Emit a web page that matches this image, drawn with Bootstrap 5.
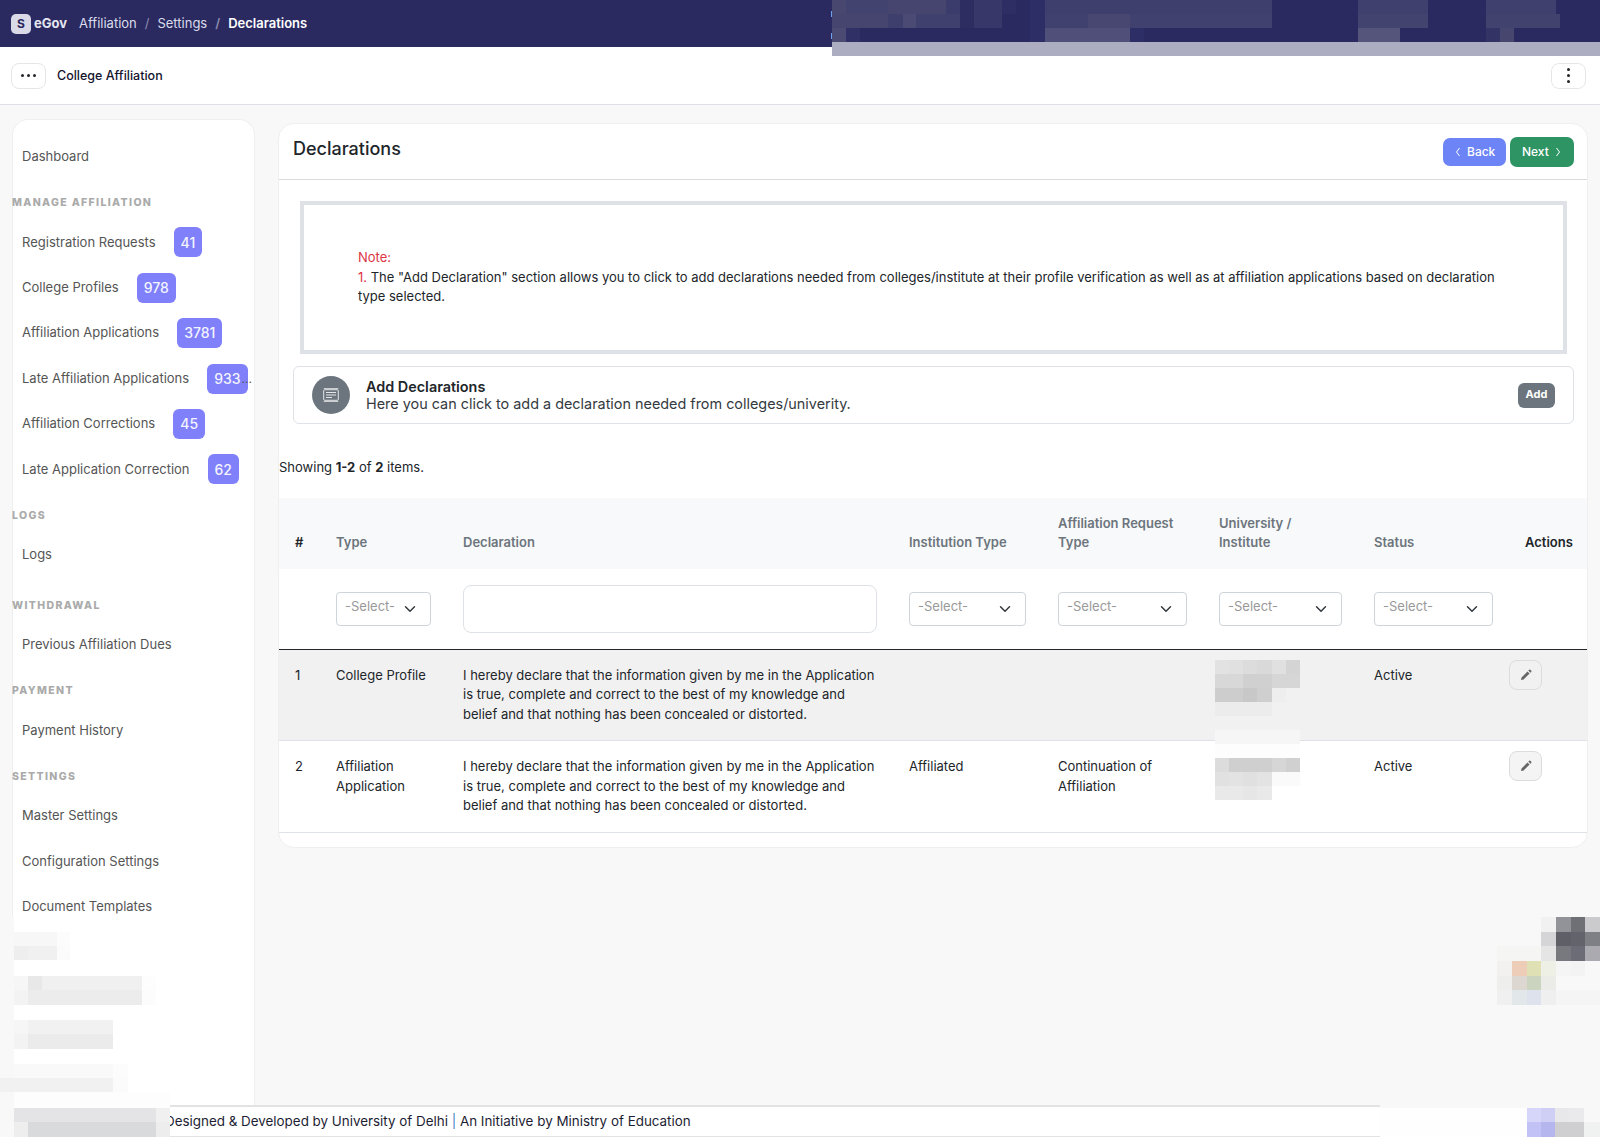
<!DOCTYPE html>
<html lang="en">
<head>
    <meta charset="UTF-8">
    <title>Declarations - College Affiliation</title>
    <link rel="stylesheet" href="https://cdn.jsdelivr.net/npm/bootstrap@5.3.3/dist/css/bootstrap.min.css">
    <style>
        body {
            font-family: "Inter", "Liberation Sans", sans-serif;
            font-size: 13px;
            line-height: 19.5px;
            background: #f8f8f8;
            color: #212529;
            height: 100vh;
            overflow: hidden;
        }

        .top-strip { height: 47px; background: #2a2a60; padding-left: 11px; }
        .logo-box {
            width: 20px; height: 20px; border-radius: 5px;
            background: #d9d9e8; color: #2a2a60;
            font-size: 12px; font-weight: 700;
        }
        .logo-name { color: #e6e6f0; font-weight: 700; margin-left: 3px; margin-right: 12px; }
        .top-strip .breadcrumb { --bs-breadcrumb-margin-bottom: 0; --bs-breadcrumb-divider-color: #8c8cb0; --bs-breadcrumb-item-active-color: #fff; }
        .top-strip .breadcrumb-item a { color: #dcdcec; text-decoration: none; }
        .top-strip .breadcrumb-item.active { font-weight: 600; }

        .sub-strip { height: 58px; background: #fff; border-bottom: 1px solid #dfdfe6; padding: 0 14px 0 11px; }
        .dots-btn {
            width: 35px; height: 26px; border: 1px solid #e6e6e6; border-radius: 8px;
            background: #fff; padding: 0; gap: 3px;
        }
        .dots-btn i { width: 3px; height: 3px; border-radius: 50%; background: #212529; display: block; }
        .app-name { font-weight: 500; font-size: 12.5px; color: #14142e; margin-left: 11px; }

        .page-body { flex: 1 1 auto; min-height: 0; padding-left: 12px; }

        .side-panel {
            width: 243px; margin-top: 14px; padding-top: 14px;
            background: #fff; border: 1px solid #efefef; border-bottom: 0;
            border-radius: 16px 16px 0 0;
        }
        .side-link {
            height: 45.4px; padding: 0 9px; color: #555;
            text-decoration: none; gap: 18px; white-space: nowrap;
        }
        .side-head {
            height: 40.3px; padding-top: 17px; margin-left: -1px;
            font-size: 10.5px; line-height: 13px; font-weight: 800;
            letter-spacing: 1.35px; color: #aaa; text-transform: uppercase;
        }
        .side-head.extra-gap { margin-top: 4px; }
        .count-pill {
            height: 30px; padding: 0 7px; border-radius: 6px;
            background: #7f80fa; color: #f4f4ff;
            font-size: 14px; font-weight: 500;
            display: inline-flex; align-items: center;
        }
        .more-dots { margin-left: -24px; color: #555; font-size: 12px; }

        .decl-card {
            width: 1310px; height: 725px; margin: 18px 0 0 23px;
            background: #fff; border: 1px solid #efefef; border-radius: 16px;
            overflow: hidden;
        }
        .decl-head { height: 56px; border-bottom: 1px solid #d9d9d9; padding: 0 13px 0 14px; }
        .decl-head h1 { font-size: 18px; font-weight: 500; margin: 0 0 6px; }
        .head-btn {
            height: 28px; border: 0; border-radius: 7px; color: #fff;
            font-size: 12px; font-weight: 500; padding: 0 10px 0 12px; gap: 6px;
            display: inline-flex; align-items: center;
        }
        .head-btn.is-back { width: 63px; background: #6c84f5; }
        .head-btn.is-next { width: 64px; height: 30px; background: #2e9464; }
        .head-btn:hover { color: #fff; }

        .note-box {
            height: 153px; margin: 21px 20px 0 21px; padding: 43px 60px 0 54px;
            border: 4px solid #dee2e6;
        }
        .note-red { color: #dc3545; }

        .add-row {
            height: 58px; margin: 12px 13px 0 14px; padding: 0 18px 0 18px;
            border: 1px solid #dee2e6; border-radius: 6px;
        }
        .add-circle { width: 38px; height: 38px; border-radius: 50%; background: #6c757d; }
        .add-title { font-size: 14.4px; font-weight: 600; line-height: 17px; }
        .add-desc { font-size: 14.4px; line-height: 17px; color: #343a40; }
        .add-btn {
            width: 37px; height: 25px; padding: 0; border: 0; border-radius: 6px;
            background: #6c757d; color: #fff; font-size: 11px; font-weight: 700;
        }

        .count-line { margin: 34px 0 20px; }

        .decl-table { table-layout: fixed; width: 1308px; margin: 0; --bs-table-border-color: #dee2e6; }
        .decl-table th, .decl-table td { padding: 16px; }
        .decl-table thead tr:first-child th { background: #f8f9fa; color: #6c757d; font-weight: 600; border: 0; height: 71px; }
        .decl-table thead tr:first-child th.dark-head { color: #212529; }
        .decl-table thead tr:last-child td { border-bottom: 1px solid #212529; vertical-align: middle; padding-right: 16px; height: 80px; }
        .decl-table tbody tr.row-grey td { background: #f1f1f1; }
        .decl-table .edit-cell { padding: 10px 0 0; }
        .col-num { width: 41px; }
        .col-type { width: 127px; }
        .col-decl { width: 446px; }
        .col-inst { width: 149px; }
        .col-req { width: 161px; }
        .col-uni { width: 155px; }
        .col-stat { width: 151px; }
        .col-act { width: 78px; }

        .filter-select {
            height: 34px; padding: 0 24px 4px 8px; font-size: 13px; color: #999;
            border-radius: 4px; border-color: #ced4da;
        }
        .filter-text { height: 48px; border-radius: 8px; border-color: #dee2e6; }
        .edit-btn {
            width: 33px; height: 30px; padding: 0;
            border: 1px solid #dcdcdc; border-radius: 8px; background: #f4f4f4;
        }
        .row-grey .edit-btn { background: #f1f1f1; }

        .foot-strip {
            height: 32px; background: #fff;
            border-top: 2px solid #e3e3e6; border-bottom: 1px solid #e3e3e6;
            padding-left: 165px; font-size: 13.4px; color: #1d1d33;
        }
        .foot-bar { color: #3f83c8; }

        .pixel-mask { position: absolute; left: 0; top: 0; width: 1600px; height: 1137px; pointer-events: none; shape-rendering: crispEdges; }
    </style>
</head>
<body class="d-flex flex-column position-relative">

    <div class="top-strip d-flex align-items-center flex-shrink-0">
        <span class="logo-box d-flex align-items-center justify-content-center">S</span>
        <span class="logo-name">eGov</span>
        <nav aria-label="breadcrumb">
            <ol class="breadcrumb">
                <li class="breadcrumb-item"><a href="#">Affiliation</a></li>
                <li class="breadcrumb-item"><a href="#">Settings</a></li>
                <li class="breadcrumb-item active" aria-current="page">Declarations</li>
            </ol>
        </nav>
    </div>

    <div class="sub-strip d-flex align-items-center flex-shrink-0">
        <button type="button" class="dots-btn d-flex align-items-center justify-content-center"><i></i><i></i><i></i></button>
        <span class="app-name">College Affiliation</span>
        <button type="button" class="dots-btn d-flex flex-column align-items-center justify-content-center ms-auto"><i></i><i></i><i></i></button>
    </div>

    <div class="page-body d-flex">
        <aside class="side-panel flex-shrink-0">
            <a href="#" class="side-link d-flex align-items-center">Dashboard</a>

            <div class="side-head">Manage Affiliation</div>
            <a href="#" class="side-link d-flex align-items-center">Registration Requests <span class="count-pill">41</span></a>
            <a href="#" class="side-link d-flex align-items-center">College Profiles <span class="count-pill">978</span></a>
            <a href="#" class="side-link d-flex align-items-center">Affiliation Applications <span class="count-pill">3781</span></a>
            <a href="#" class="side-link d-flex align-items-center">Late Affiliation Applications <span class="count-pill">933</span><span class="more-dots">...</span></a>
            <a href="#" class="side-link d-flex align-items-center">Affiliation Corrections <span class="count-pill">45</span></a>
            <a href="#" class="side-link d-flex align-items-center">Late Application Correction <span class="count-pill">62</span></a>

            <div class="side-head">Logs</div>
            <a href="#" class="side-link d-flex align-items-center">Logs</a>

            <div class="side-head extra-gap">Withdrawal</div>
            <a href="#" class="side-link d-flex align-items-center">Previous Affiliation Dues</a>

            <div class="side-head">Payment</div>
            <a href="#" class="side-link d-flex align-items-center">Payment History</a>

            <div class="side-head">Settings</div>
            <a href="#" class="side-link d-flex align-items-center">Master Settings</a>
            <a href="#" class="side-link d-flex align-items-center">Configuration Settings</a>
            <a href="#" class="side-link d-flex align-items-center">Document Templates</a>
        </aside>

        <main class="decl-card flex-shrink-0">
            <div class="decl-head d-flex align-items-center justify-content-between">
                <h1>Declarations</h1>
                <div class="d-flex align-items-center gap-1">
                    <a href="#" class="btn head-btn is-back">
                        <svg width="6" height="10" viewBox="0 0 6 10"><path d="M4.5 1 1.5 5l3 4" fill="none" stroke="#fff" stroke-width="1"/></svg>
                        Back
                    </a>
                    <a href="#" class="btn head-btn is-next">
                        Next
                        <svg width="6" height="10" viewBox="0 0 6 10"><path d="M1.5 1l3 4-3 4" fill="none" stroke="#fff" stroke-width="1"/></svg>
                    </a>
                </div>
            </div>

            <div class="note-box">
                <div class="note-red">Note:</div>
                <div><span class="note-red">1.</span> The "Add Declaration" section allows you to click to add declarations needed from colleges/institute at their profile verification as well as at affiliation applications based on declaration type selected.</div>
            </div>

            <div class="add-row d-flex align-items-center">
                <span class="add-circle d-flex align-items-center justify-content-center flex-shrink-0">
                    <svg width="16" height="14" viewBox="0 0 16 14" fill="none" stroke="#e4e6e8">
                        <rect x="0.7" y="1.7" width="14.6" height="10.6" rx="1"/>
                        <path d="M0.7 0.5h14.6M0.7 13.5h14.6" stroke-width="0.8"/>
                        <path d="M3 4.5h10M3 7h10M3 9.5h6" stroke-width="1.2"/>
                    </svg>
                </span>
                <div class="ms-3 flex-grow-1">
                    <div class="add-title">Add Declarations</div>
                    <div class="add-desc">Here you can click to add a declaration needed from colleges/univerity.</div>
                </div>
                <button type="button" class="add-btn">Add</button>
            </div>

            <div class="count-line">Showing <b>1-2</b> of <b>2</b> items.</div>

            <table class="table decl-table">
                <colgroup>
                    <col class="col-num"><col class="col-type"><col class="col-decl"><col class="col-inst">
                    <col class="col-req"><col class="col-uni"><col class="col-stat"><col class="col-act">
                </colgroup>
                <thead>
                    <tr>
                        <th class="dark-head">#</th>
                        <th>Type</th>
                        <th>Declaration</th>
                        <th>Institution Type</th>
                        <th>Affiliation Request Type</th>
                        <th>University / Institute</th>
                        <th>Status</th>
                        <th class="dark-head">Actions</th>
                    </tr>
                    <tr>
                        <td></td>
                        <td><select class="form-select filter-select"><option>-Select-</option></select></td>
                        <td><input type="text" class="form-control filter-text"></td>
                        <td><select class="form-select filter-select"><option>-Select-</option></select></td>
                        <td><select class="form-select filter-select"><option>-Select-</option></select></td>
                        <td><select class="form-select filter-select"><option>-Select-</option></select></td>
                        <td><select class="form-select filter-select"><option>-Select-</option></select></td>
                        <td></td>
                    </tr>
                </thead>
                <tbody>
                    <tr class="row-grey">
                        <td>1</td>
                        <td>College Profile</td>
                        <td>I hereby declare that the information given by me in the Application is true, complete and correct to the best of my knowledge and belief and that nothing has been concealed or distorted.</td>
                        <td></td>
                        <td></td>
                        <td></td>
                        <td>Active</td>
                        <td class="edit-cell">
                            <button type="button" class="edit-btn d-flex align-items-center justify-content-center" aria-label="Edit">
                                <svg width="12" height="12" viewBox="0 0 12 12"><path d="M1 11l.5-2.6 6-6L9.6 4.5l-6 6zM8.3 1.6l.9-.9a.8.8 0 0 1 1.1 0l1 1a.8.8 0 0 1 0 1.1l-.9.9z" fill="#666"/></svg>
                            </button>
                        </td>
                    </tr>
                    <tr>
                        <td>2</td>
                        <td>Affiliation Application</td>
                        <td>I hereby declare that the information given by me in the Application is true, complete and correct to the best of my knowledge and belief and that nothing has been concealed or distorted.</td>
                        <td>Affiliated</td>
                        <td>Continuation of Affiliation</td>
                        <td></td>
                        <td>Active</td>
                        <td class="edit-cell">
                            <button type="button" class="edit-btn d-flex align-items-center justify-content-center" aria-label="Edit">
                                <svg width="12" height="12" viewBox="0 0 12 12"><path d="M1 11l.5-2.6 6-6L9.6 4.5l-6 6zM8.3 1.6l.9-.9a.8.8 0 0 1 1.1 0l1 1a.8.8 0 0 1 0 1.1l-.9.9z" fill="#666"/></svg>
                            </button>
                        </td>
                    </tr>
                </tbody>
            </table>
        </main>
    </div>

    <footer class="foot-strip d-flex align-items-center flex-shrink-0">
        <span>Designed &amp; Developed by University of Delhi <span class="foot-bar">|</span> An Initiative by Ministry of Education</span>
    </footer>

    <!-- pixelated blocks that hide parts of the screen -->
    <svg class="pixel-mask" viewBox="0 0 1600 1137" aria-hidden="true">
        <!-- top right -->
        <rect x="832" y="42" width="768" height="14" fill="#adadc1"/>
        <rect x="831" y="11" width="1" height="6" fill="#6fa0f0"/><rect x="831" y="33" width="1" height="6" fill="#6fa0f0"/>
        <rect x="832" y="0" width="14" height="14" fill="#47476f"/><rect x="846" y="0" width="42" height="14" fill="#434370"/><rect x="888" y="0" width="58" height="14" fill="#45456f"/><rect x="946" y="0" width="14" height="14" fill="#3c3c6c"/><rect x="960" y="0" width="14" height="14" fill="#2e2d62"/><rect x="974" y="0" width="28" height="14" fill="#37376a"/><rect x="1002" y="0" width="14" height="14" fill="#2e2e64"/><rect x="1030" y="0" width="15" height="14" fill="#2e2e66"/><rect x="1045" y="0" width="227" height="14" fill="#3f3f6d"/><rect x="1358" y="0" width="70" height="14" fill="#40406e"/><rect x="1486" y="0" width="70" height="14" fill="#40406e"/>
        <rect x="832" y="14" width="56" height="14" fill="#45456f"/><rect x="888" y="14" width="15" height="14" fill="#3f3f6d"/><rect x="903" y="14" width="13" height="14" fill="#4a4a74"/><rect x="916" y="14" width="44" height="14" fill="#40406e"/><rect x="960" y="14" width="14" height="14" fill="#2e2d62"/><rect x="974" y="14" width="28" height="14" fill="#37376a"/><rect x="1030" y="14" width="15" height="14" fill="#2e2e66"/><rect x="1045" y="14" width="43" height="14" fill="#41416f"/><rect x="1088" y="14" width="42" height="14" fill="#474772"/><rect x="1130" y="14" width="142" height="14" fill="#41416f"/><rect x="1358" y="14" width="70" height="14" fill="#43436f"/><rect x="1486" y="14" width="74" height="14" fill="#42426f"/>
        <rect x="832" y="28" width="14" height="14" fill="#4a4a72"/><rect x="846" y="28" width="14" height="14" fill="#303066"/><rect x="1030" y="28" width="15" height="14" fill="#2e2e66"/><rect x="1045" y="28" width="85" height="14" fill="#4f4f7a"/><rect x="1130" y="28" width="14" height="14" fill="#2e2e66"/><rect x="1358" y="28" width="42" height="14" fill="#55557c"/><rect x="1486" y="28" width="14" height="14" fill="#333366"/><rect x="1500" y="28" width="14" height="14" fill="#46466f"/>
        <!-- university column, row 1 -->
        <rect x="1215" y="660" width="14" height="14" fill="#e2e2e2"/><rect x="1229" y="660" width="14" height="14" fill="#e0e0e0"/><rect x="1243" y="660" width="14" height="14" fill="#dcdcdc"/><rect x="1257" y="660" width="15" height="14" fill="#d9d9d9"/><rect x="1272" y="660" width="14" height="14" fill="#e0e0e0"/><rect x="1286" y="660" width="14" height="14" fill="#d4d4d4"/>
        <rect x="1215" y="674" width="28" height="14" fill="#d8d8d8"/><rect x="1243" y="674" width="29" height="14" fill="#d0d0d0"/><rect x="1272" y="674" width="28" height="14" fill="#d6d6d6"/>
        <rect x="1215" y="688" width="28" height="14" fill="#cdcdcd"/><rect x="1243" y="688" width="14" height="14" fill="#c8c8c8"/><rect x="1257" y="688" width="15" height="14" fill="#cfcfcf"/><rect x="1272" y="688" width="14" height="14" fill="#eeeeee"/>
        <rect x="1215" y="702" width="57" height="14" fill="#ececec"/>
        <!-- university column, row 2 -->
        <rect x="1215" y="730" width="85" height="14" fill="#f6f6f6"/><rect x="1215" y="744" width="85" height="14" fill="#fdfdfd"/>
        <rect x="1215" y="758" width="14" height="14" fill="#dcdcdc"/><rect x="1229" y="758" width="43" height="14" fill="#cfcfcf"/><rect x="1272" y="758" width="14" height="14" fill="#d6d6d6"/><rect x="1286" y="758" width="14" height="14" fill="#d0d0d0"/>
        <rect x="1215" y="772" width="14" height="14" fill="#e1e1e1"/><rect x="1229" y="772" width="14" height="14" fill="#e3e3e3"/><rect x="1243" y="772" width="14" height="14" fill="#e0e0e0"/><rect x="1257" y="772" width="15" height="14" fill="#e3e3e3"/><rect x="1272" y="772" width="28" height="14" fill="#fafafa"/>
        <rect x="1215" y="786" width="28" height="14" fill="#e9e9e9"/><rect x="1243" y="786" width="14" height="14" fill="#e6e6e6"/><rect x="1257" y="786" width="15" height="14" fill="#e9e9e9"/>
        <!-- lower left -->
        <rect x="0" y="917" width="170" height="220" fill="#fff"/>
        <rect x="0" y="917" width="14" height="220" fill="#f8f8f8"/>
        <rect x="14" y="932" width="43" height="14" fill="#f7f7f7"/><rect x="57" y="932" width="13" height="14" fill="#fcfcfc"/>
        <rect x="14" y="946" width="14" height="14" fill="#eeeeee"/><rect x="28" y="946" width="29" height="14" fill="#f0f0f0"/><rect x="57" y="946" width="13" height="14" fill="#fbfbfb"/>
        <rect x="14" y="976" width="14" height="14" fill="#f6f6f6"/><rect x="28" y="976" width="14" height="14" fill="#e8e8e8"/><rect x="42" y="976" width="100" height="14" fill="#f0f0f0"/><rect x="142" y="976" width="14" height="14" fill="#fdfdfd"/>
        <rect x="14" y="990" width="14" height="15" fill="#f3f3f3"/><rect x="28" y="990" width="114" height="15" fill="#ececec"/><rect x="142" y="990" width="14" height="15" fill="#fcfcfc"/>
        <rect x="14" y="1020" width="14" height="14" fill="#f6f6f6"/><rect x="28" y="1020" width="85" height="14" fill="#f1f1f1"/>
        <rect x="14" y="1034" width="14" height="15" fill="#f3f3f3"/><rect x="28" y="1034" width="85" height="15" fill="#ebebeb"/>
        <rect x="14" y="1064" width="99" height="14" fill="#f9f9f9"/><rect x="113" y="1064" width="15" height="14" fill="#fcfcfc"/>
        <rect x="0" y="1078" width="113" height="14" fill="#f1f1f1"/><rect x="113" y="1078" width="15" height="14" fill="#fbfbfb"/>
        <rect x="14" y="1092" width="156" height="16" fill="#fdfdfd"/>
        <rect x="14" y="1108" width="142" height="14" fill="#e4e4e6"/><rect x="156" y="1108" width="14" height="14" fill="#f0f0f0"/>
        <rect x="14" y="1122" width="14" height="15" fill="#eeeeee"/><rect x="28" y="1122" width="128" height="15" fill="#d9dadc"/><rect x="156" y="1122" width="14" height="15" fill="#ededee"/>
        <!-- lower right -->
        <rect x="1541" y="917" width="15" height="15" fill="#f1f1f1"/><rect x="1556" y="917" width="15" height="15" fill="#929299"/><rect x="1571" y="917" width="14" height="15" fill="#6f7075"/><rect x="1585" y="917" width="15" height="15" fill="#cbcbcd"/>
        <rect x="1541" y="932" width="15" height="14" fill="#d5d5d7"/><rect x="1556" y="932" width="15" height="14" fill="#5f5f67"/><rect x="1571" y="932" width="14" height="14" fill="#62636b"/><rect x="1585" y="932" width="15" height="14" fill="#7f8085"/>
        <rect x="1497" y="946" width="44" height="15" fill="#f5f5f4"/><rect x="1541" y="946" width="15" height="15" fill="#e5e5e6"/><rect x="1556" y="946" width="15" height="15" fill="#78797e"/><rect x="1571" y="946" width="14" height="15" fill="#6b6c76"/><rect x="1585" y="946" width="15" height="15" fill="#aaaab0"/>
        <rect x="1497" y="961" width="15" height="15" fill="#f3f1f0"/><rect x="1512" y="961" width="15" height="15" fill="#edcdb8"/><rect x="1527" y="961" width="14" height="15" fill="#dfe0b3"/><rect x="1541" y="961" width="15" height="15" fill="#eef0e6"/><rect x="1556" y="961" width="15" height="15" fill="#f5f5f5"/><rect x="1571" y="961" width="14" height="15" fill="#f3f3f4"/>
        <rect x="1497" y="976" width="15" height="14" fill="#eeeeec"/><rect x="1512" y="976" width="15" height="14" fill="#ddd7d1"/><rect x="1527" y="976" width="14" height="14" fill="#cbd4bf"/><rect x="1541" y="976" width="15" height="14" fill="#ebece8"/>
        <rect x="1497" y="990" width="15" height="15" fill="#f0f0f0"/><rect x="1512" y="990" width="15" height="15" fill="#e2e7ea"/><rect x="1527" y="990" width="14" height="15" fill="#dee2ec"/><rect x="1541" y="990" width="15" height="15" fill="#efefef"/><rect x="1556" y="990" width="44" height="15" fill="#f5f5f5"/>
        <!-- footer right -->
        <rect x="1380" y="1094" width="220" height="14" fill="#f8f8f8"/><rect x="1380" y="1108" width="220" height="29" fill="#fefefe"/>
        <rect x="1527" y="1108" width="14" height="14" fill="#d6d6fa"/><rect x="1541" y="1108" width="14" height="14" fill="#cfcff6"/><rect x="1555" y="1108" width="14" height="14" fill="#e8e8ea"/><rect x="1569" y="1108" width="15" height="14" fill="#eaeaec"/><rect x="1584" y="1108" width="16" height="14" fill="#f8f8f8"/>
        <rect x="1527" y="1122" width="14" height="15" fill="#c2c2f7"/><rect x="1541" y="1122" width="14" height="15" fill="#b6b6ee"/><rect x="1555" y="1122" width="29" height="15" fill="#cfcfd2"/><rect x="1584" y="1122" width="16" height="15" fill="#eff2f1"/>
    </svg>

    <script src="https://cdn.jsdelivr.net/npm/bootstrap@5.3.3/dist/js/bootstrap.bundle.min.js"></script>
</body>
</html>
